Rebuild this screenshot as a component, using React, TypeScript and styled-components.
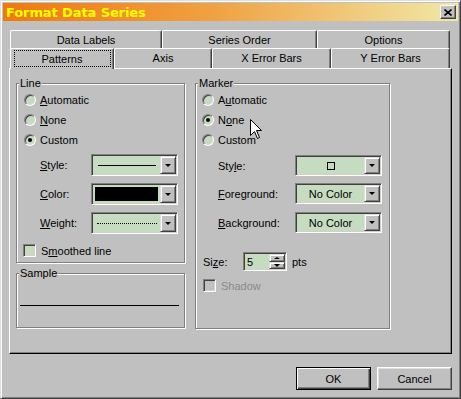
import styled, { createGlobalStyle } from "styled-components";

// palette
const face = "#c0c0c0";
const field = "#c6dcc0";

const GlobalStyle = createGlobalStyle`
  html, body { margin: 0; padding: 0; background: ${face}; }
  body {
    font-family: "Liberation Sans", Arial, sans-serif;
    font-size: 11px;
    color: #000;
  }
  * { box-sizing: border-box; }
`;

const Window = styled.div`
  width: 461px;
  height: 399px;
  background: ${face};
  border: 1px solid;
  border-color: #dfdfdf #404040 #404040 #dfdfdf;
  box-shadow: inset 1px 1px 0 #fff, inset -1px -1px 0 #808080;
  padding: 2px;
  display: flex;
  flex-direction: column;
`;

const TitleBar = styled.div`
  height: 18px;
  display: flex;
  align-items: center;
  justify-content: space-between;
  padding: 0 2px 0 3px;
  background: linear-gradient(to right, #f07810 0%, #f0a040 45%, #f0e8a8 100%);
`;

const Title = styled.span`
  font-family: "DejaVu Sans", Verdana, sans-serif;
  font-weight: bold;
  font-size: 13px;
  color: #ffff00;
  letter-spacing: -0.1px;
`;

const CloseButton = styled.div`
  width: 16px;
  height: 14px;
  background: ${face};
  border: 1px solid;
  border-color: #fff #404040 #404040 #fff;
  box-shadow: inset -1px -1px 0 #808080;
  display: flex;
  align-items: center;
  justify-content: center;
`;

const Body = styled.div`
  flex: 1;
  display: flex;
  flex-direction: column;
  padding: 9px 6px 0 6px;
`;

const TabRow = styled.div<{ $h: number }>`
  display: flex;
  align-items: flex-end;
  height: ${(p) => p.$h}px;
  padding-left: 1px;
`;

const Tab = styled.div<{ $w: number; $active?: boolean }>`
  width: ${(p) => p.$w}px;
  height: ${(p) => (p.$active ? 21 : 20)}px;
  margin-bottom: ${(p) => (p.$active ? -1 : 0)}px;
  position: relative;
  z-index: ${(p) => (p.$active ? 2 : 0)};
  background: ${face};
  border-top: 1px solid #fff;
  border-left: 1px solid #fff;
  border-right: 1px solid #404040;
  border-radius: 2px 2px 0 0;
  box-shadow: inset -1px 0 0 #808080;
  display: flex;
  align-items: ${(p) => (p.$active ? "flex-start" : "center")};
  justify-content: center;
  padding-top: ${(p) => (p.$active ? 1 : 0)}px;
  padding-bottom: 1px;
  white-space: nowrap;
`;

const FocusLabel = styled.span`
  display: flex;
  align-items: center;
  justify-content: center;
  width: 97px;
  height: 17px;
  outline: 1px dotted #000;
  outline-offset: -1px;
`;

const Panel = styled.div`
  height: 286px;
  border: 1px solid;
  border-color: #fff #000 #000 #fff;
  box-shadow: inset -1px -1px 0 #808080;
  display: flex;
  gap: 10px;
  padding: 14px 0 0 6px;
`;

const Column = styled.div`
  display: flex;
  flex-direction: column;
`;

const GroupBox = styled.div<{ $w: number; $h: number; $mt?: number }>`
  position: relative;
  width: ${(p) => p.$w}px;
  height: ${(p) => p.$h}px;
  margin-top: ${(p) => p.$mt ?? 0}px;
  border: 1px solid #808080;
  box-shadow: inset 1px 1px 0 #fff, 1px 1px 0 #fff;
  display: flex;
  flex-direction: column;
  padding-top: 6px;
`;

const Caption = styled.span`
  position: absolute;
  top: -7px;
  left: 2px;
  padding: 0 1px;
  line-height: 13px;
  background: ${face};
`;

const OptionRow = styled.div<{ $pl: number; $h?: number; $mt?: number; $disabled?: boolean }>`
  display: flex;
  align-items: center;
  gap: 4px;
  height: ${(p) => p.$h ?? 20}px;
  margin-top: ${(p) => p.$mt ?? 0}px;
  padding-left: ${(p) => p.$pl}px;
  color: ${(p) => (p.$disabled ? "#8a8a8a" : "#000")};
`;

const Radio = styled.span<{ $checked?: boolean }>`
  width: 12px;
  height: 12px;
  border-radius: 50%;
  background: ${field};
  border: 1px solid;
  border-color: #808080 #fff #fff #808080;
  box-shadow: inset 1px 1px 0 #404040;
  display: flex;
  align-items: center;
  justify-content: center;
  &::after {
    content: "";
    width: 4px;
    height: 4px;
    border-radius: 50%;
    background: ${(p) => (p.$checked ? "#000" : "transparent")};
  }
`;

const Check = styled.span<{ $disabled?: boolean }>`
  width: 13px;
  height: 13px;
  background: ${(p) => (p.$disabled ? face : field)};
  border: 1px solid;
  border-color: #808080 #fff #fff #808080;
  box-shadow: inset 1px 1px 0 #404040, inset -1px -1px 0 #d4d0c8;
  margin-right: 1px;
`;

const FieldRow = styled.div<{ $pl: number; $lw: number; $mt: number; $h: number }>`
  display: flex;
  align-items: center;
  height: ${(p) => p.$h}px;
  margin-top: ${(p) => p.$mt}px;
  padding-left: ${(p) => p.$pl}px;
  > label {
    width: ${(p) => p.$lw}px;
  }
`;

const Combo = styled.div<{ $w: number }>`
  width: ${(p) => p.$w}px;
  height: 100%;
  display: flex;
  background: ${field};
  border: 1px solid;
  border-color: #808080 #fff #fff #808080;
  padding: 1px;
  box-shadow: inset 1px 1px 0 #404040, inset -1px -1px 0 #d4d0c8;
`;

const ComboValue = styled.div`
  flex: 1;
  display: flex;
  align-items: center;
  justify-content: center;
`;

const DropButton = styled.div`
  width: 16px;
  height: 100%;
  background: ${face};
  border: 1px solid;
  border-color: #dfdfdf #404040 #404040 #dfdfdf;
  box-shadow: inset 1px 1px 0 #fff, inset -1px -1px 0 #808080;
  display: flex;
  align-items: center;
  justify-content: center;
`;

const Arrow = styled.span<{ $up?: boolean; $size?: number }>`
  width: 0;
  height: 0;
  border-left: ${(p) => p.$size ?? 4}px solid transparent;
  border-right: ${(p) => p.$size ?? 4}px solid transparent;
  ${(p) =>
    p.$up
      ? `border-bottom: ${(p.$size ?? 4) - 1}px solid #000;`
      : `border-top: ${p.$size ?? 4}px solid #000;`}
`;

const SolidLine = styled.span`
  width: 58px;
  height: 1px;
  background: #000;
`;

const DottedLine = styled.span`
  width: 60px;
  height: 0;
  border-top: 1px dotted #000;
`;

const Swatch = styled.span`
  flex: 1;
  align-self: stretch;
  margin: 2px;
  background: #000;
`;

const MarkerSquare = styled.span`
  width: 8px;
  height: 8px;
  border: 1px solid #000;
`;

const Spinner = styled.div`
  width: 44px;
  height: 19px;
  display: flex;
  background: ${field};
  border: 1px solid;
  border-color: #808080 #fff #fff #808080;
  padding: 1px;
  box-shadow: inset 1px 1px 0 #404040, inset -1px -1px 0 #d4d0c8;
`;

const SpinValue = styled.span`
  flex: 1;
  display: flex;
  align-items: center;
  padding-left: 2px;
`;

const SpinButtons = styled.div`
  width: 16px;
  display: flex;
  flex-direction: column;
`;

const SpinHalf = styled(DropButton)`
  width: 16px;
  height: 50%;
`;

const Units = styled.span`
  margin-left: 5px;
`;

const SampleLine = styled.div`
  height: 1px;
  margin: 25px 5px 0 3px;
  background: #000;
`;

const Pointer = styled.svg`
  position: absolute;
  left: 54px;
  top: 35px;
`;

const ButtonRow = styled.div`
  display: flex;
  justify-content: flex-end;
  gap: 6px;
  margin-top: 13px;
`;

const Button = styled.div<{ $default?: boolean }>`
  width: 75px;
  height: 23px;
  display: flex;
  align-items: center;
  justify-content: center;
  background: ${face};
  border: 1px solid;
  border-color: ${(p) => (p.$default ? "#000" : "#fff #404040 #404040 #fff")};
  box-shadow: ${(p) =>
    p.$default
      ? "inset 1px 1px 0 #fff, inset -1px -1px 0 #404040, inset -2px -2px 0 #808080"
      : "inset -1px -1px 0 #808080, inset 1px 1px 0 #dfdfdf"};
`;

function Combobox({ w, children }: { w: number; children: React.ReactNode }) {
  return (
    <Combo $w={w}>
      <ComboValue>{children}</ComboValue>
      <DropButton>
        <Arrow $size={3.5} />
      </DropButton>
    </Combo>
  );
}

export default function App() {
  return (
    <>
      <GlobalStyle />
      <Window>
        <TitleBar>
          <Title>Format Data Series</Title>
          <CloseButton>
            <svg width="8" height="7" viewBox="0 0 8 7">
              <path d="M0.5 0.5 L7.5 6.5 M7.5 0.5 L0.5 6.5" stroke="#000" strokeWidth="1.6" />
            </svg>
          </CloseButton>
        </TitleBar>

        <Body>
          <TabRow $h={20}>
            <Tab $w={152}>Data Labels</Tab>
            <Tab $w={155}>Series Order</Tab>
            <Tab $w={133}>Options</Tab>
          </TabRow>
          <TabRow $h={18}>
            <Tab $w={104} $active>
              <FocusLabel>Patterns</FocusLabel>
            </Tab>
            <Tab $w={98}>Axis</Tab>
            <Tab $w={119}>X Error Bars</Tab>
            <Tab $w={119}>Y Error Bars</Tab>
          </TabRow>

          <Panel>
            <Column>
              <GroupBox $w={169} $h={180}>
                <Caption>Line</Caption>
                <OptionRow $pl={7}>
                  <Radio />
                  <span><u>A</u>utomatic</span>
                </OptionRow>
                <OptionRow $pl={7}>
                  <Radio />
                  <span><u>N</u>one</span>
                </OptionRow>
                <OptionRow $pl={7}>
                  <Radio $checked />
                  <span>Custom</span>
                </OptionRow>
                <FieldRow $pl={23} $lw={51} $mt={4} $h={22}>
                  <label><u>S</u>tyle:</label>
                  <Combobox w={87}>
                    <SolidLine />
                  </Combobox>
                </FieldRow>
                <FieldRow $pl={23} $lw={51} $mt={7} $h={22}>
                  <label><u>C</u>olor:</label>
                  <Combo $w={87}>
                    <Swatch />
                    <DropButton>
                      <Arrow $size={3.5} />
                    </DropButton>
                  </Combo>
                </FieldRow>
                <FieldRow $pl={23} $lw={51} $mt={7} $h={22}>
                  <label><u>W</u>eight:</label>
                  <Combobox w={87}>
                    <DottedLine />
                  </Combobox>
                </FieldRow>
                <OptionRow $pl={6} $h={13} $mt={10}>
                  <Check />
                  <span>S<u>m</u>oothed line</span>
                </OptionRow>
              </GroupBox>

              <GroupBox $w={169} $h={55} $mt={10}>
                <Caption>Sample</Caption>
                <SampleLine />
              </GroupBox>
            </Column>

            <GroupBox $w={195} $h={246}>
              <Caption>Marker</Caption>
              <OptionRow $pl={6}>
                <Radio />
                <span>A<u>u</u>tomatic</span>
              </OptionRow>
              <OptionRow $pl={6}>
                <Radio $checked />
                <span>N<u>o</u>ne</span>
              </OptionRow>
              <OptionRow $pl={6}>
                <Radio />
                <span>Custom</span>
              </OptionRow>
              <FieldRow $pl={22} $lw={77} $mt={5} $h={21}>
                <label>Sty<u>l</u>e:</label>
                <Combobox w={87}>
                  <MarkerSquare />
                </Combobox>
              </FieldRow>
              <FieldRow $pl={22} $lw={77} $mt={7} $h={21}>
                <label><u>F</u>oreground:</label>
                <Combobox w={87}>No Color</Combobox>
              </FieldRow>
              <FieldRow $pl={22} $lw={77} $mt={8} $h={21}>
                <label><u>B</u>ackground:</label>
                <Combobox w={87}>No Color</Combobox>
              </FieldRow>
              <FieldRow $pl={7} $lw={40} $mt={19} $h={19}>
                <label>Si<u>z</u>e:</label>
                <Spinner>
                  <SpinValue>5</SpinValue>
                  <SpinButtons>
                    <SpinHalf>
                      <Arrow $up $size={3} />
                    </SpinHalf>
                    <SpinHalf>
                      <Arrow $size={3} />
                    </SpinHalf>
                  </SpinButtons>
                </Spinner>
                <Units>pts</Units>
              </FieldRow>
              <OptionRow $pl={7} $h={13} $mt={8} $disabled>
                <Check $disabled />
                <span>Shadow</span>
              </OptionRow>

              <Pointer width="13" height="21" viewBox="0 0 13 21">
                <path
                  d="M0.5 0.5 L0.5 16.5 L4.5 12.5 L7.5 19.5 L9.5 18.5 L6.5 11.5 L11.5 11.5 Z"
                  fill="#fff"
                  stroke="#000"
                  strokeWidth="1"
                />
              </Pointer>
            </GroupBox>
          </Panel>

          <ButtonRow>
            <Button $default>OK</Button>
            <Button>Cancel</Button>
          </ButtonRow>
        </Body>
      </Window>
    </>
  );
}
